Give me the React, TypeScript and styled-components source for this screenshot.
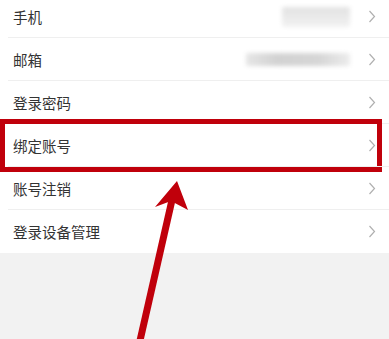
import React from "react";
import styled, { createGlobalStyle } from "styled-components";

const Global = createGlobalStyle`
  html, body { margin: 0; padding: 0; height: 100%; background: #f2f2f2; overflow: hidden; }
  #root { height: 100%; }
  * { box-sizing: border-box; }
`;

const Page = styled.div`
  position: relative;
  width: 389px;
  height: 339px;
  background: #f2f2f2;
  font-family: "Noto Sans CJK SC", "Noto Sans", sans-serif;
  overflow: hidden;
`;

const List = styled.div`
  background: #fff;
  margin-top: -5px;
  display: flex;
  flex-direction: column;
`;

const Row = styled.div`
  position: relative;
  height: 43px;
  display: flex;
  align-items: center;
  padding: 0 13px 0 13px;
  &:not(:last-child)::after {
    content: "";
    position: absolute;
    left: 8px;
    right: 0;
    bottom: 0;
    height: 1px;
    background: #efefef;
  }
`;

const Label = styled.span`
  flex: 1;
  font-size: 14.5px;
  color: #333;
  letter-spacing: 0;
`;

const Value = styled.div<{ $w: number; $h: number; $tone: string }>`
  width: ${(p) => p.$w}px;
  height: ${(p) => p.$h}px;
  background: ${(p) => p.$tone};
  filter: blur(2px);
  margin-right: 18px;
  border-radius: 2px;
`;

const Chevron = styled.svg`
  width: 8px;
  height: 13px;
  flex: none;
`;

const Highlight = styled.div`
  position: absolute;
  left: 0;
  right: 7px;
  top: -5px;
  bottom: -5px;
  border: 5.5px solid #c0000b;
  pointer-events: none;
`;

const ArrowLayer = styled.svg`
  position: absolute;
  left: 0;
  top: 0;
  width: 389px;
  height: 339px;
  pointer-events: none;
`;

const Arrow = () => (
  <Chevron viewBox="0 0 8 13">
    <path d="M1.5 1 L6.5 6.5 L1.5 12" fill="none" stroke="#b0b0b0" strokeWidth="1.2" />
  </Chevron>
);

type Item = { label: string; value?: { w: number; h: number; tone: string }; highlight?: boolean };

const items: Item[] = [
  { label: "手机", value: { w: 68, h: 20, tone: "linear-gradient(#e2e2e2, #f2f2f2)" } },
  { label: "邮箱", value: { w: 104, h: 13, tone: "linear-gradient(90deg,#e6e6e6,#d2d2d2 30%,#d6d6d6 70%,#ececec)" } },
  { label: "登录密码" },
  { label: "绑定账号", highlight: true },
  { label: "账号注销" },
  { label: "登录设备管理" },
];

export default function App() {
  return (
    <Page>
      <Global />
      <List>
        {items.map((it) => (
          <Row key={it.label}>
            <Label>{it.label}</Label>
            {it.value && <Value $w={it.value.w} $h={it.value.h} $tone={it.value.tone} />}
            <Arrow />
            {it.highlight && <Highlight />}
          </Row>
        ))}
      </List>
      <ArrowLayer viewBox="0 0 389 339">
        <line x1="172" y1="200" x2="139" y2="345" stroke="#c0000b" strokeWidth="7" />
        <polygon points="177,181 155,207 171,201 188,210" fill="#c0000b" />
      </ArrowLayer>
    </Page>
  );
}
